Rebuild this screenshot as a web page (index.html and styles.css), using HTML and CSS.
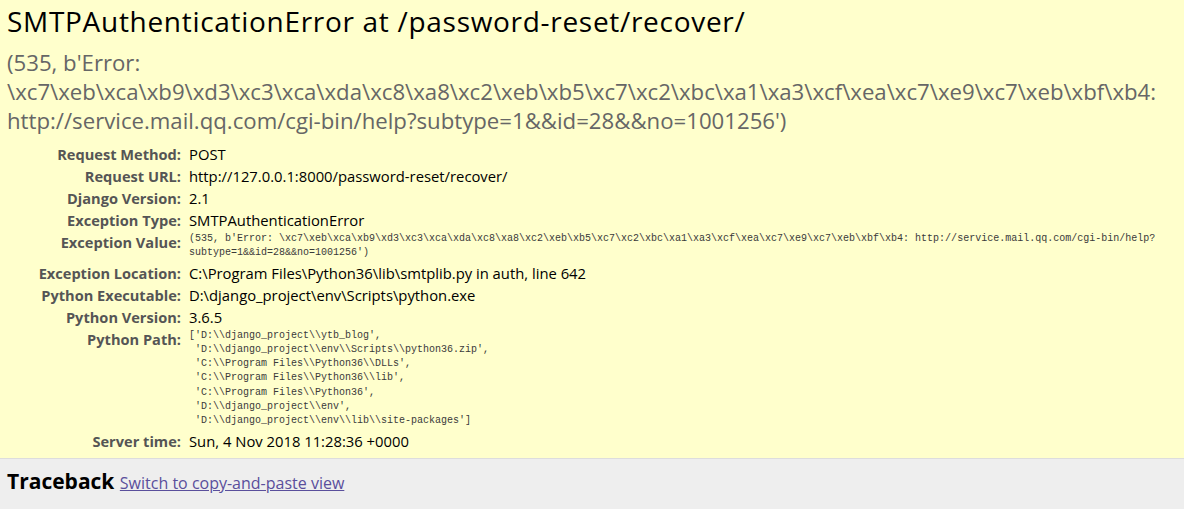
FILE: index.html
```html
<!DOCTYPE html>
<html lang="en">
<head>
<meta charset="utf-8">
<title>SMTPAuthenticationError at /password-reset/recover/</title>
<link rel="stylesheet" href="styles.css">
</head>
<body>
<div class="summary">
  <h1 class="title">SMTPAuthenticationError at /password-reset/recover/</h1>
  <pre class="exception-value">(535, b'Error: \xc7\xeb\xca\xb9\xd3\xc3\xca\xda\xc8\xa8\xc2\xeb\xb5\xc7\xc2\xbc\xa1\xa3\xcf\xea\xc7\xe9\xc7\xeb\xbf\xb4: http://service.mail.qq.com/cgi-bin/help?subtype=1&amp;&amp;id=28&amp;&amp;no=1001256')</pre>
  <table class="meta">
    <tbody>
      <tr><th>Request Method:</th><td>POST</td></tr>
      <tr><th>Request URL:</th><td>http://127.0.0.1:8000/password-reset/recover/</td></tr>
      <tr><th>Django Version:</th><td>2.1</td></tr>
      <tr><th>Exception Type:</th><td>SMTPAuthenticationError</td></tr>
      <tr><th>Exception Value:</th><td><pre class="mono">(535, b'Error: \xc7\xeb\xca\xb9\xd3\xc3\xca\xda\xc8\xa8\xc2\xeb\xb5\xc7\xc2\xbc\xa1\xa3\xcf\xea\xc7\xe9\xc7\xeb\xbf\xb4: http://service.mail.qq.com/cgi-bin/help?subtype=1&amp;&amp;id=28&amp;&amp;no=1001256')</pre></td></tr>
      <tr><th>Exception Location:</th><td>C:\Program Files\Python36\lib\smtplib.py in auth, line 642</td></tr>
      <tr><th>Python Executable:</th><td>D:\django_project\env\Scripts\python.exe</td></tr>
      <tr><th>Python Version:</th><td>3.6.5</td></tr>
      <tr><th>Python Path:</th><td><pre class="mono">['D:\\django_project\\ytb_blog',
 'D:\\django_project\\env\\Scripts\\python36.zip',
 'C:\\Program Files\\Python36\\DLLs',
 'C:\\Program Files\\Python36\\lib',
 'C:\\Program Files\\Python36',
 'D:\\django_project\\env',
 'D:\\django_project\\env\\lib\\site-packages']</pre></td></tr>
      <tr><th>Server time:</th><td>Sun, 4 Nov 2018 11:28:36 +0000</td></tr>
    </tbody>
  </table>
</div>
<div class="traceback">
  <h2 class="tb-title">Traceback <span class="commands"><a class="switch" href="#">Switch to copy-and-paste view</a></span></h2>
</div>
</body>
</html>
```
FILE: styles.css
```css
html, body {
  margin: 0;
  padding: 0;
}
body {
  font-family: "Open Sans", "Noto Sans", sans-serif;
  background: #eeeeee;
  color: #000;
}
.summary {
  background: #ffffcc;
  padding: 4px 7px 6px;
  border-bottom: 1px solid #dddddd;
}
.title {
  margin: 0;
  font-size: 28px;
  line-height: 34px;
  letter-spacing: 0.7px;
  font-weight: normal;
  color: #000;
}
.exception-value {
  margin: 10px 0 0;
  font-family: "Open Sans", "Noto Sans", sans-serif;
  font-size: 22.2px;
  line-height: 29px;
  color: #666666;
  white-space: pre-wrap;
}
.meta {
  margin-top: 8px;
  border-collapse: collapse;
  width: 100%;
}
.meta th {
  width: 174px;
  padding: 1px 4px 1px 0;
  text-align: right;
  vertical-align: top;
  font-size: 14.6px;
  line-height: 20px;
  font-weight: bold;
  color: #555555;
  white-space: nowrap;
}
.meta td {
  padding: 1px 0 1px 4px;
  vertical-align: top;
  font-size: 14.8px;
  line-height: 20px;
}
.mono {
  margin: 0;
  font-family: "Liberation Mono", "DejaVu Sans Mono", monospace;
  font-size: 10px;
  line-height: 14.3px;
  color: #3a3a3a;
  white-space: pre-wrap;
}
.traceback {
  padding: 9px 7px 10px;
}
.tb-title {
  margin: 0;
  font-size: 21px;
  line-height: 26px;
  font-weight: bold;
}
.commands {
  font-size: 16px;
  font-weight: normal;
}
.switch {
  color: #5a4f9c;
  text-decoration: underline;
}
```
